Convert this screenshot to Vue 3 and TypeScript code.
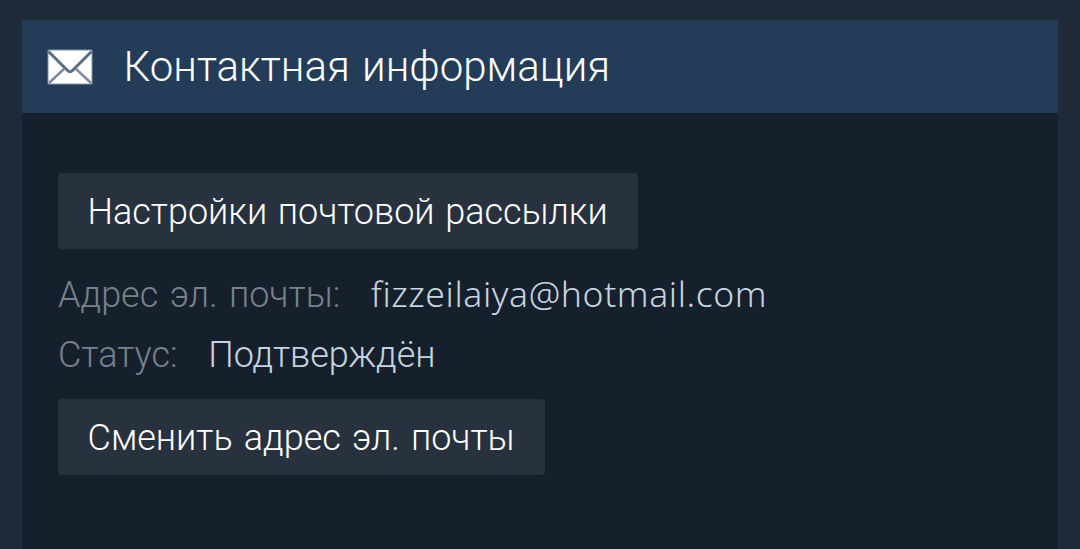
<template>
  <div class="page">
    <section class="panel">
      <header class="panel-header">
        <svg class="mail-icon" viewBox="0 0 46 36" aria-hidden="true">
          <rect x="0.5" y="0.5" width="45" height="35" rx="1.5" class="mail-edge" />
          <rect x="1.5" y="1.5" width="43" height="33" rx="0.5" class="mail-body" />
          <path d="M2 34 L17 20 M44 34 L29 20" class="mail-fold" />
          <path d="M1.5 2.5 L20.5 21.5 Q23 24 25.5 21.5 L44.5 2.5" class="mail-flap" />
        </svg>
        <h2 class="panel-title">{{ title }}</h2>
      </header>
      <div class="panel-body">
        <button type="button" class="btn btn-settings">Настройки почтовой рассылки</button>
        <dl class="info">
          <div v-for="row in rows" :key="row.label" class="info-row">
            <dt class="info-label">{{ row.label }}</dt>
            <dd class="info-value" :class="{ latin: row.latin }">{{ row.value }}</dd>
          </div>
        </dl>
        <button type="button" class="btn btn-change">Сменить адрес эл. почты</button>
      </div>
    </section>
  </div>
</template>

<script setup lang="ts">
interface InfoRow {
  label: string
  value: string
  latin?: boolean
}

const title = 'Контактная информация'

const rows: InfoRow[] = [
  { label: 'Адрес эл. почты:', value: 'fizzeilaiya@hotmail.com', latin: true },
  { label: 'Статус:', value: 'Подтверждён' }
]
</script>

<style>
body {
  background: #1e2a38;
}
</style>

<style scoped>
.page {
  display: flex;
  height: 549px;
  padding: 20px 22px 0;
  box-sizing: border-box;
  overflow: hidden;
  background: #1e2a38;
  font-family: Roboto, "Noto Sans", sans-serif;
  font-weight: 300;
}
.panel {
  flex: 1;
  background: #16202c;
}
.panel-header {
  display: flex;
  align-items: center;
  height: 93px;
  padding-left: 25px;
  box-sizing: border-box;
  background: #233d59;
}
.mail-icon {
  width: 46px;
  height: 36px;
  margin-top: 1px;
}
.mail-edge {
  fill: #8194aa;
}
.mail-body {
  fill: #fff;
}
.mail-fold,
.mail-flap {
  fill: none;
  stroke: #7b8b9d;
  stroke-width: 2.4;
}
.mail-flap {
  stroke: #596d83;
  stroke-width: 3;
}
.panel-title {
  margin: 0 0 0 30.5px;
  color: #fff;
  font-size: 42px;
  font-weight: 300;
  line-height: 50px;
  word-spacing: 2px;
  white-space: nowrap;
}
.panel-body {
  display: flex;
  flex-direction: column;
  align-items: flex-start;
  padding: 60px 36px 0;
}
.btn {
  height: 76px;
  padding: 2px 30px 0 29.5px;
  border: 0;
  border-radius: 4px;
  background: #28323e;
  color: #fff;
  font-family: inherit;
  font-size: 36px;
  font-weight: 300;
  line-height: 74px;
  word-spacing: 1.8px;
  white-space: nowrap;
}
.btn-change {
  word-spacing: 2.3px;
}
.info {
  margin: 16px 0 14px;
}
.info-row {
  display: flex;
  height: 60px;
  font-size: 36px;
  line-height: 60px;
  white-space: nowrap;
}
.info-label {
  color: #77818c;
  word-spacing: 2.6px;
}
.info-value {
  margin: 0 0 0 30.6px;
  color: #c6d4df;
}
.info-value.latin {
  font-family: "Noto Sans", sans-serif;
  font-size: 35.5px;
  font-weight: 350;
  line-height: 57px;
  letter-spacing: 0.6px;
}
</style>
